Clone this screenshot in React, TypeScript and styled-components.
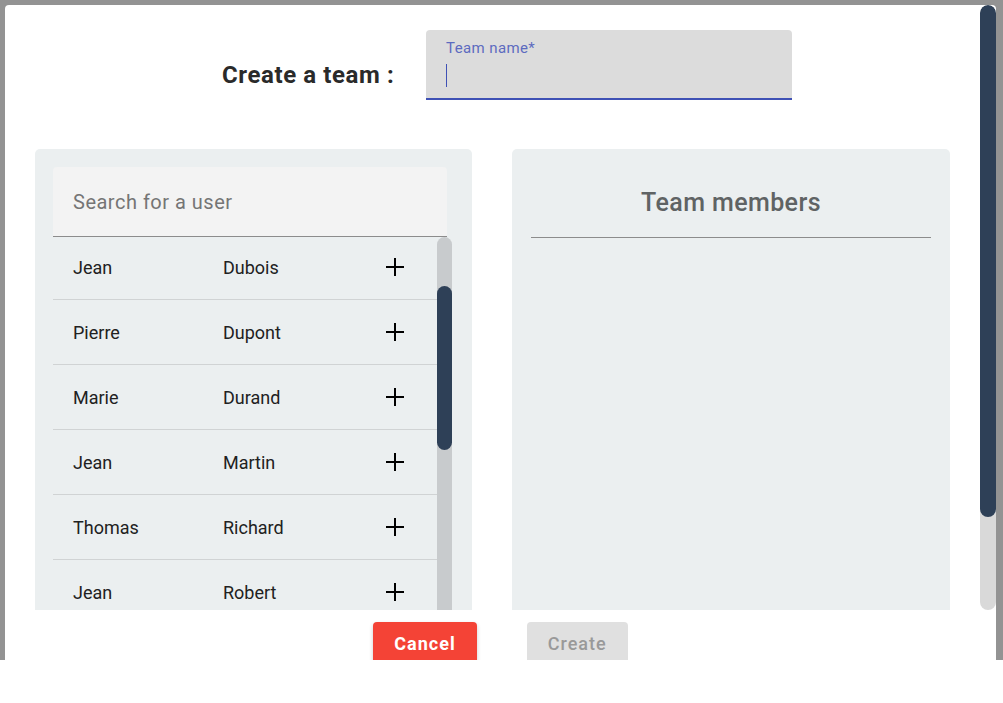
import styled, { createGlobalStyle } from 'styled-components';

const GlobalStyle = createGlobalStyle`
  body {
    margin: 0;
    background: #fff;
    font-family: Roboto, 'Liberation Sans', sans-serif;
  }
`;

const Backdrop = styled.div`
  height: 660px;
  box-sizing: border-box;
  padding: 5px 7px 0 5px;
  background: #939393;
  overflow: hidden;
`;

const Modal = styled.div`
  height: 100%;
  background: #fff;
  border-radius: 4px 4px 0 0;
  display: flex;
  flex-direction: column;
`;

const Body = styled.div`
  display: flex;
  height: 605px;
  flex-shrink: 0;
  overflow: hidden;
`;

const Content = styled.div`
  flex: 1;
  padding: 25px 30px 0;
  overflow: hidden;
`;

const Track = styled.div<{ $width: number; $color: string; $full?: boolean }>`
  width: ${p => p.$width}px;
  flex-shrink: 0;
  background: ${p => p.$color};
  border-radius: ${p => (p.$full ? '8px' : '8px 8px 0 0')};
  overflow: hidden;
`;

const Thumb = styled.div`
  background: #2e4057;
  border-radius: 8px;
`;

const Header = styled.div`
  display: flex;
  align-items: center;
  padding-left: 187px;
`;

const Title = styled.h2`
  width: 204px;
  margin: 20px 0 0;
  font-size: 24px;
  font-weight: 700;
  letter-spacing: 0.6px;
  color: #2a2a2a;
`;

const NameField = styled.div`
  width: 366px;
  height: 70px;
  box-sizing: border-box;
  padding: 10px 20px 0;
  background: #dcdcdc;
  border-radius: 4px 4px 0 0;
  border-bottom: 2px solid #3f51b5;
`;

const FieldLabel = styled.div`
  font-size: 15px;
  line-height: 17px;
  letter-spacing: 0.4px;
  color: #5c6bc0;
`;

const Caret = styled.div`
  width: 1px;
  height: 23px;
  margin-top: 7px;
  background: #3f51b5;
`;

const Panels = styled.div`
  display: grid;
  grid-template-columns: 437px 438px;
  gap: 40px;
  margin-top: 49px;
  height: 500px;
`;

const Panel = styled.div<{ $pad: string }>`
  background: #ebeff0;
  border-radius: 5px;
  padding: ${p => p.$pad};
  display: flex;
  flex-direction: column;
  overflow: hidden;
`;

const Search = styled.div`
  width: 394px;
  height: 70px;
  box-sizing: border-box;
  display: flex;
  align-items: center;
  padding-left: 20px;
  background: #f3f3f3;
  border-radius: 4px 4px 0 0;
  border-bottom: 1px solid #8c8c8c;
  font-size: 20px;
  color: #757575;
  letter-spacing: 0.5px;
`;

const ListWrap = styled.div`
  display: flex;
  flex: 1;
  min-height: 0;
`;

const List = styled.div`
  width: 384px;
  overflow: hidden;
`;

const ListInner = styled.div<{ $offset: number }>`
  margin-top: -${p => p.$offset}px;
`;

const Row = styled.div`
  display: grid;
  grid-template-columns: 150px 150px 44px;
  align-items: center;
  height: 65px;
  box-sizing: border-box;
  padding-left: 20px;
  border-bottom: 1px solid #d0d3d4;
  font-size: 18px;
  color: #212121;
`;

const AddIcon = styled.svg`
  justify-self: center;
  display: block;
`;

const MembersTitle = styled.div`
  padding-top: 40px;
  text-align: center;
  font-size: 25px;
  line-height: 28px;
  font-weight: 500;
  letter-spacing: 0.4px;
  color: #5f6364;
`;

const Divider = styled.div`
  margin-top: 20px;
  height: 1px;
  background: #8c8c8c;
`;

const Footer = styled.div`
  display: flex;
  justify-content: center;
  gap: 50px;
  padding-top: 12px;
`;

const Button = styled.button<{ $primary?: boolean }>`
  height: 42px;
  padding: 0 21px;
  border: none;
  border-radius: 4px;
  font-family: Roboto, 'Liberation Sans', sans-serif;
  font-size: 18px;
  font-weight: ${p => (p.$primary ? 700 : 500)};
  letter-spacing: 1px;
  background: ${p => (p.$primary ? '#f44336' : '#e0e0e0')};
  color: ${p => (p.$primary ? '#fff' : '#999999')};
  box-shadow: ${p => (p.$primary ? '0 2px 4px rgba(0,0,0,0.2)' : 'none')};
`;

const users = [
  ['Jean', 'Dubois'],
  ['Pierre', 'Dupont'],
  ['Marie', 'Durand'],
  ['Jean', 'Martin'],
  ['Thomas', 'Richard'],
  ['Jean', 'Robert'],
];

function Plus() {
  return (
    <AddIcon width="20" height="20" viewBox="0 0 20 20">
      <path d="M1 10h18M10 1v18" stroke="#000" strokeWidth="2" fill="none" />
    </AddIcon>
  );
}

export default function App() {
  return (
    <>
      <GlobalStyle />
      <Backdrop>
        <Modal>
          <Body>
            <Content>
              <Header>
                <Title>Create a team :</Title>
                <NameField>
                  <FieldLabel>Team name*</FieldLabel>
                  <Caret />
                </NameField>
              </Header>
              <Panels>
                <Panel $pad="18px">
                  <Search>Search for a user</Search>
                  <ListWrap>
                    <List>
                      <ListInner $offset={2}>
                        {users.map(([first, last], i) => (
                          <Row key={i}>
                            <span>{first}</span>
                            <span>{last}</span>
                            <Plus />
                          </Row>
                        ))}
                      </ListInner>
                    </List>
                    <Track $width={15} $color="#c8cbcd">
                      <Thumb style={{ marginTop: 49, height: 164 }} />
                    </Track>
                  </ListWrap>
                </Panel>
                <Panel $pad="0 19px">
                  <MembersTitle>Team members</MembersTitle>
                  <Divider />
                </Panel>
              </Panels>
            </Content>
            <Track $width={16} $color="#d9d9d9" $full>
              <Thumb style={{ height: 512 }} />
            </Track>
          </Body>
          <Footer>
            <Button $primary>Cancel</Button>
            <Button>Create</Button>
          </Footer>
        </Modal>
      </Backdrop>
    </>
  );
}
